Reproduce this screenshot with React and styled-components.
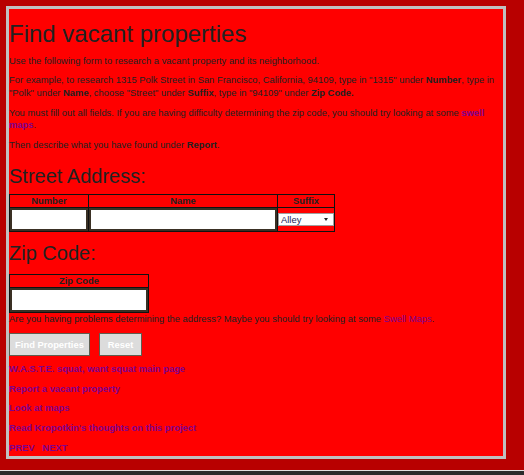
import React from "react";
import styled, { createGlobalStyle } from "styled-components";

const Global = createGlobalStyle`
  html, body { margin: 0; padding: 0; background: #2b2b2b; }
  body { font-family: "Liberation Sans", Arial, sans-serif; }
`;

const Page = styled.div`
  background: #b80000;
  padding: 6px 18px 11px 6px;
`;

const Panel = styled.div`
  border: 3px solid #c0c0c0;
  background: #ff0000;
  color: #222;
  font-size: 9.4px;
  line-height: 12.67px;
  padding-bottom: 2px;
  & > *:last-child { margin-bottom: 0; }
`;

const Title = styled.h1`
  font-size: 24px;
  font-weight: normal;
  line-height: normal;
  margin: 10.5px 0 6px;
`;

const Heading = styled.h2`
  font-size: 20px;
  font-weight: normal;
  line-height: normal;
  margin: ${(p) => p.$top}px 0 ${(p) => p.$bottom}px;
`;

const Para = styled.p`
  margin: ${(p) => (p.$flush ? "0 0 7px" : "7px 0")};
`;

const Link = styled.a`
  color: #800090;
  font-weight: ${(p) => (p.$plain ? "normal" : "bold")};
  text-decoration: none;
`;

const Table = styled.table`
  border-collapse: collapse;
  table-layout: fixed;
  width: ${(p) => p.$width}px;
  margin: 0;
  border: 1px solid #111;
`;

const Th = styled.th`
  border: 1px solid #111;
  padding: 0;
  font-weight: bold;
  font-size: 9.4px;
  line-height: 12.67px;
  text-align: center;
  color: #222;
`;

const Td = styled.td`
  border: 1px solid #111;
  padding: 0;
  vertical-align: middle;
`;

const Field = styled.input`
  display: block;
  box-sizing: border-box;
  width: 100%;
  height: ${(p) => p.$h || 23}px;
  margin: 0;
  border: 2px solid #3a3024;
  background: #fff;
  font: 9px "Liberation Sans", Arial, sans-serif;
  outline: none;
`;

const SelectWrap = styled.span`
  position: relative;
  display: block;
  width: 56px;
  height: 13px;
`;

const Select = styled.select`
  appearance: none;
  -webkit-appearance: none;
  display: block;
  box-sizing: border-box;
  width: 56px;
  height: 13px;
  margin: 0;
  padding: 0 0 0 2px;
  border: 1px solid #a0a0a0;
  border-radius: 0;
  background: #fff;
  color: #1c2456;
  font: 9.4px/11px "Liberation Sans", Arial, sans-serif;
`;

const Arrow = styled.svg`
  position: absolute;
  right: 6px;
  top: 5px;
  pointer-events: none;
`;

const Buttons = styled.div`
  display: flex;
  gap: 9px;
  margin: 7px 0;
`;

const Button = styled.button`
  box-sizing: border-box;
  width: ${(p) => p.$w}px;
  height: 23px;
  padding: 0;
  background: #dcdcdc;
  border: 1px solid #5e5e50;
  color: #fff;
  font: bold 9.4px "Liberation Sans", Arial, sans-serif;
`;

const Footer = styled.div`
  border-top: 1px solid #e0e0e0;
  background: #2b2b2b;
  height: 40px;
`;

export default function App() {
  return (
    <>
      <Global />
      <Page>
        <Panel>
          <Title>Find vacant properties</Title>
          <Para>Use the following form to research a vacant property and its neighborhood.</Para>
          <Para>
            For example, to research 1315 Polk Street in San Francisco, California, 94109, type in "1315" under{" "}
            <b>Number</b>, type in "Polk" under <b>Name</b>, choose "Street" under <b>Suffix</b>, type in "94109" under{" "}
            <b>Zip Code.</b>
          </Para>
          <Para>
            You must fill out all fields. If you are having difficulty determining the zip code, you should try looking at
            some <Link href="#">swell maps</Link>.
          </Para>
          <Para>
            Then describe what you have found under <b>Report</b>.
          </Para>
          <Heading $top={13} $bottom={6}>Street Address:</Heading>
          <Table $width={326}>
            <colgroup>
              <col style={{ width: 79 }} />
              <col style={{ width: 189 }} />
              <col style={{ width: 57 }} />
            </colgroup>
            <thead>
              <tr>
                <Th>Number</Th>
                <Th>Name</Th>
                <Th>Suffix</Th>
              </tr>
            </thead>
            <tbody>
              <tr>
                <Td><Field /></Td>
                <Td><Field /></Td>
                <Td>
                  <SelectWrap>
                    <Select defaultValue="Alley">
                      <option>Alley</option>
                      <option>Avenue</option>
                      <option>Boulevard</option>
                      <option>Street</option>
                    </Select>
                    <Arrow width="4" height="3" viewBox="0 0 4 3">
                      <path d="M0 0h4L2 3z" fill="#222" />
                    </Arrow>
                  </SelectWrap>
                </Td>
              </tr>
            </tbody>
          </Table>
          <Heading $top={10} $bottom={8.5}>Zip Code:</Heading>
          <Table $width={140}>
            <thead>
              <tr>
                <Th>Zip Code</Th>
              </tr>
            </thead>
            <tbody>
              <tr>
                <Td><Field $h={24} /></Td>
              </tr>
            </tbody>
          </Table>
          <Para $flush>
            Are you having problems determining the address? Maybe you should try looking at some{" "}
            <Link href="#" $plain>Swell Maps</Link>.
          </Para>
          <Buttons>
            <Button $w={81}>Find Properties</Button>
            <Button $w={43}>Reset</Button>
          </Buttons>
          <Para><Link href="#">W.A.S.T.E. squat, want squat main page</Link></Para>
          <Para><Link href="#">Report a vacant property</Link></Para>
          <Para><Link href="#">Look at maps</Link></Para>
          <Para><Link href="#">Read Kropotkin's thoughts on this project</Link></Para>
          <Para>
            <Link href="#">PREV</Link>{"\u00a0\u00a0 "}<Link href="#">NEXT</Link>
          </Para>
        </Panel>
      </Page>
      <Footer />
    </>
  );
}
